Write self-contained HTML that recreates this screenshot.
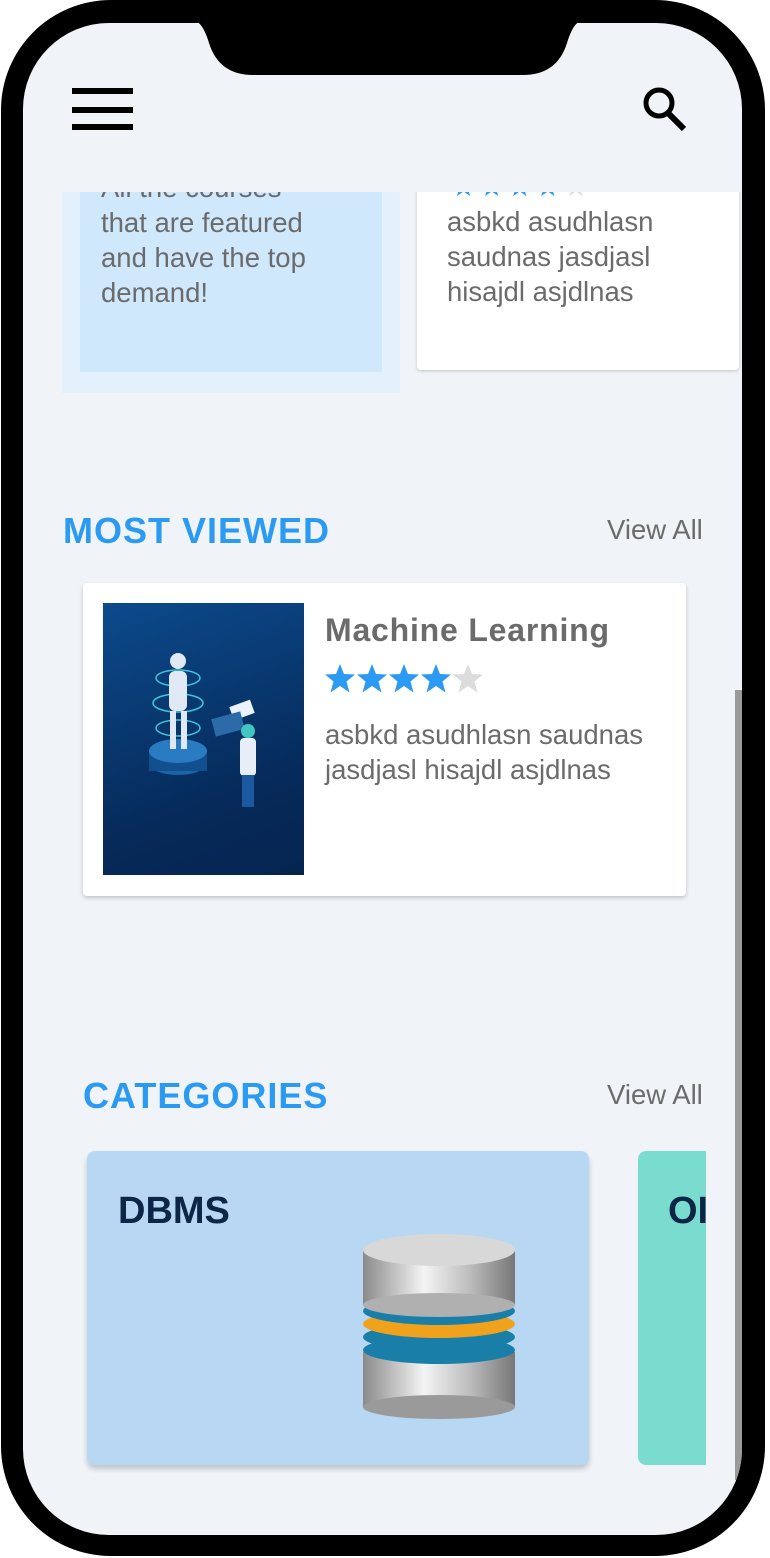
<!DOCTYPE html>
<html><head><style>
*{margin:0;padding:0;box-sizing:border-box}
body{width:770px;height:1558px;background:#fff;position:relative;overflow:hidden;font-family:"Liberation Sans",sans-serif}
.frame{position:absolute;left:1px;top:0;width:764px;height:1556px;background:#000;border-radius:110px}
.screen{position:absolute;left:23px;top:23px;width:719px;height:1512px;background:#f0f4f8;border-radius:86px;overflow:hidden}
.abs{position:absolute}
.t{color:#6b6b6b;font-size:27.5px;line-height:35px}
.h{color:#2b9af3;font-weight:bold;font-size:36px;letter-spacing:1px}
.va{color:#6b6b6b;font-size:27.5px}
</style></head><body>
<div class="frame"></div>
<div class="screen">
  <div class="abs" style="left:0;top:169px;width:719px;height:1343px;overflow:hidden">
    <div class="abs" style="left:39px;top:-10px;width:338px;height:211px;background:#e3f1fc"></div>
    <div class="abs" style="left:57px;top:-10px;width:302px;height:190px;background:#cfe8fb"></div>
    <div class="abs t" style="left:78px;top:-22px">All the courses<br>that are featured<br>and have the top<br>demand!</div>
    <div class="abs" style="left:394px;top:-10px;width:322px;height:188px;background:#fff;border-radius:4px;box-shadow:0 1px 3px rgba(0,0,0,.2)"></div>
    <div class="abs" style="left:428px;top:-22px;color:#2b9af3;font-size:28px;letter-spacing:3px">★★★★<span style="color:#ddd">★</span></div>
    <div class="abs t" style="left:424px;top:12px">asbkd asudhlasn<br>saudnas jasdjasl<br>hisajdl asjdlnas</div>

    <div class="abs h" style="left:40px;top:318px">MOST VIEWED</div>
    <div class="abs va" style="left:584px;top:322px">View All</div>
    <div class="abs" style="left:60px;top:391px;width:603px;height:313px;background:#fff;border-radius:4px;box-shadow:0 2px 4px rgba(0,0,0,.2)"></div>
    <div class="abs" style="left:80px;top:411px;width:201px;height:272px;background:linear-gradient(160deg,#0c4a8c,#062a5a 70%,#052450)">
      <svg width="201" height="272">
        <ellipse cx="75" cy="160" rx="29" ry="12" fill="#1b64a8"/>
        <rect x="46" y="148" width="58" height="20" fill="#124f8e"/>
        <ellipse cx="75" cy="148" rx="29" ry="12" fill="#2a7cc2"/>
        <ellipse cx="75" cy="75" rx="22" ry="8" fill="none" stroke="#3fc6d8" stroke-width="1.5"/>
        <ellipse cx="75" cy="100" rx="25" ry="9" fill="none" stroke="#3fc6d8" stroke-width="1.5"/>
        <ellipse cx="75" cy="125" rx="22" ry="8" fill="none" stroke="#3fc6d8" stroke-width="1.5"/>
        <circle cx="75" cy="58" r="8" fill="#dfe8f3"/>
        <rect x="66" y="68" width="18" height="40" rx="6" fill="#dfe8f3"/>
        <rect x="67" y="108" width="6" height="38" fill="#dfe8f3"/><rect x="78" y="108" width="6" height="38" fill="#dfe8f3"/>
        <rect x="128" y="100" width="22" height="14" fill="#eaf2fb" transform="rotate(-20 139 107)"/>
        <rect x="110" y="112" width="30" height="18" fill="#2c6aa8" transform="rotate(-15 125 121)"/>
        <circle cx="145" cy="128" r="7" fill="#41c6c0"/>
        <rect x="137" y="135" width="16" height="38" rx="4" fill="#e8eef7"/>
        <rect x="139" y="172" width="12" height="32" fill="#1b5aa0"/>
      </svg>
    </div>
    <div class="abs" style="left:302px;top:420px;font-weight:bold;font-size:32px;color:#6b6b6b;letter-spacing:0.8px">Machine Learning</div>
    <svg class="abs" style="left:302px;top:471px" width="165" height="32">
      <defs><polygon id="s" points="15,1 19,11 30,11.5 21.5,18.5 24.5,29.5 15,23 5.5,29.5 8.5,18.5 0,11.5 11,11"/></defs>
      <use href="#s" x="0" fill="#2b9af3"/><use href="#s" x="32" fill="#2b9af3"/><use href="#s" x="64" fill="#2b9af3"/><use href="#s" x="96" fill="#2b9af3"/><use href="#s" x="128" fill="#dcdcdc"/>
    </svg>
    <div class="abs t" style="left:302px;top:525px">asbkd asudhlasn saudnas<br>jasdjasl hisajdl asjdlnas</div>

    <div class="abs h" style="left:60px;top:883px">CATEGORIES</div>
    <div class="abs va" style="left:584px;top:887px">View All</div>
    <div class="abs" style="left:64px;top:959px;width:502px;height:314px;background:#b8d7f3;border-radius:8px;box-shadow:0 4px 6px rgba(0,0,0,.2)"></div>
    <div class="abs" style="left:95px;top:998px;font-weight:bold;font-size:38px;color:#0d2547">DBMS</div>
    <svg class="abs" style="left:335px;top:1040px" width="160" height="190">
      <defs><linearGradient id="m" x1="0" x2="1"><stop offset="0" stop-color="#8a8a8a"/><stop offset=".4" stop-color="#f4f4f4"/><stop offset=".7" stop-color="#bdbdbd"/><stop offset="1" stop-color="#777"/></linearGradient></defs>
      <rect x="5" y="120" width="152" height="55" fill="url(#m)"/>
      <ellipse cx="81" cy="175" rx="76" ry="12" fill="#9a9a9a"/>
      <ellipse cx="81" cy="118" rx="76" ry="14" fill="#1a7fa8"/>
      <ellipse cx="81" cy="105" rx="76" ry="14" fill="#1a7fa8"/>
      <ellipse cx="81" cy="92" rx="76" ry="14" fill="#f0a21c"/>
      <ellipse cx="81" cy="79" rx="76" ry="14" fill="#1a7fa8"/>
      <rect x="5" y="18" width="152" height="55" fill="url(#m)"/>
      <ellipse cx="81" cy="73" rx="76" ry="12" fill="#b0b0b0"/>
      <ellipse cx="81" cy="18" rx="76" ry="16" fill="#d8d8d8"/>
    </svg>
    <div class="abs" style="left:615px;top:959px;width:68px;height:314px;background:#7adccf;border-radius:8px 0 0 8px;overflow:hidden">
      <div style="position:absolute;left:30px;top:39px;font-weight:bold;font-size:38px;color:#0d2547">OI</div>
    </div>
    <div class="abs" style="left:712px;top:498px;width:7px;height:790px;background:#9a9a9a"></div>
  </div>
  <svg class="abs" style="left:160px;top:-2px" width="410" height="56"><path d="M12 0 L398 0 Q390 2 384 22 Q374 54 340 54 L70 54 Q36 54 26 22 Q20 2 12 0 Z" fill="#000"/></svg>
  <div class="abs" style="left:49px;top:65px;width:61px;height:6px;background:#000"></div>
  <div class="abs" style="left:49px;top:84px;width:61px;height:6px;background:#000"></div>
  <div class="abs" style="left:49px;top:101px;width:61px;height:6px;background:#000"></div>
  <svg class="abs" style="left:618px;top:60px" width="50" height="50"><circle cx="18" cy="20" r="13" fill="none" stroke="#000" stroke-width="5"/><line x1="27" y1="30" x2="43" y2="46" stroke="#000" stroke-width="6"/></svg>
</div>
</body></html>
